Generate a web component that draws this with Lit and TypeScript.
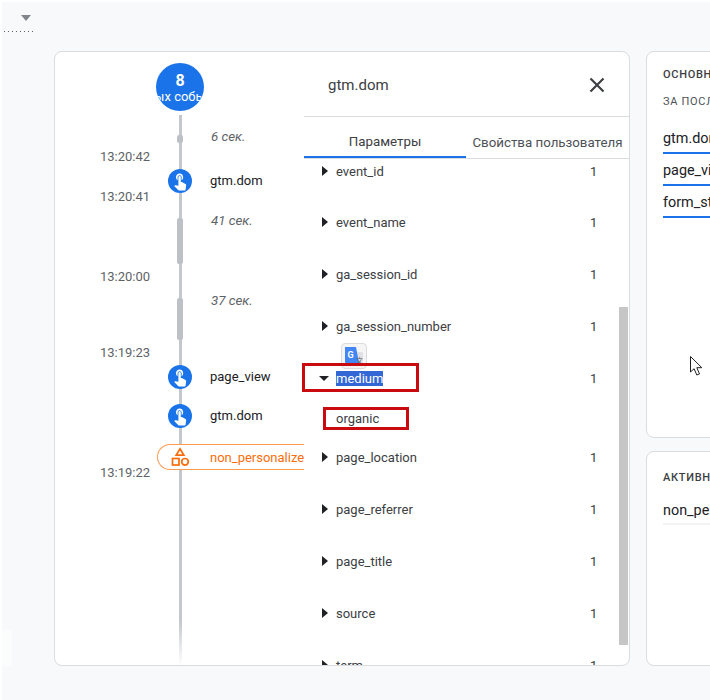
import { LitElement, html, css, svg } from "lit";
import { customElement } from "lit/decorators.js";

const hand = svg`<g transform="translate(2.4 2.2) scale(.8)" fill="#fff"><path d="M9 11.24V7.5C9 6.12 10.12 5 11.5 5S14 6.12 14 7.5v3.74c1.21-.81 2-2.18 2-3.74C16 5.01 13.99 3 11.5 3S7 5.01 7 7.5c0 1.56.79 2.93 2 3.74zm9.84 4.63l-4.54-2.26c-.17-.07-.35-.11-.54-.11H13v-6c0-.83-.67-1.5-1.5-1.5S10 6.67 10 7.5v10.74l-3.43-.72c-.08-.01-.15-.03-.24-.03-.31 0-.59.13-.79.33l-.79.8 4.94 4.94c.27.27.65.44 1.06.44h6.79c.75 0 1.33-.55 1.44-1.28l.75-5.27c.01-.07.02-.14.02-.2 0-.62-.38-1.16-.91-1.38z"/></g>`;

type Row = { h: number; kind: "gap" | "event" | "conv"; label: string; pillTop?: number; pill?: number; labelTop?: number };
const rows: Row[] = [
  { h: 58, kind: "gap", label: "6 сек.", pillTop: 24, pill: 8, labelTop: 18 },
  { h: 24, kind: "event", label: "gtm.dom" },
  { h: 71, kind: "gap", label: "41 сек.", pillTop: 25, pill: 46, labelTop: 20 },
  { h: 101, kind: "gap", label: "37 сек.", pillTop: 34, pill: 42, labelTop: 29 },
  { h: 24, kind: "event", label: "page_view" },
  { h: 39, kind: "event", label: "gtm.dom" },
  { h: 42, kind: "conv", label: "non_personalize" },
];
const times: [string, number][] = [
  ["13:20:42", 97], ["13:20:41", 24], ["13:20:00", 64], ["13:19:23", 60], ["13:19:22", 104],
];
const before = ["event_id", "event_name", "ga_session_id", "ga_session_number"];
const after = ["page_location", "page_referrer", "page_title", "source", "term"];

@customElement("app-root")
export class AppRoot extends LitElement {
  static styles = css`
    :host { display: block; width: 710px; height: 700px; overflow: hidden; background: #fff; font-family: Roboto, sans-serif; color: #202124; }
    .page { margin: 2px 0 0 2px; height: 698px; background: #f8f9fa; position: relative; overflow: hidden; }
    .blob { position: absolute; left: 0; top: 628px; width: 10px; height: 36px; background: #fbfcfc; }
    .top { height: 49px; box-sizing: border-box; padding: 13px 0 0 19px; }
    .tri { width: 0; height: 0; border: 5px solid transparent; border-top: 6px solid #80868b; border-bottom: 0; }
    .dots { width: 29px; height: 1px; margin: 10px 0 0 -17px; background: repeating-linear-gradient(90deg, #5f6368 0 1px, transparent 1px 4px); }
    .main { display: flex; gap: 16px; margin-left: 52px; }
    .card { background: #fff; border: 1px solid #dadce0; border-radius: 8px; box-sizing: border-box; }
    .left { width: 576px; height: 615px; display: flex; overflow: hidden; flex: none; }
    .side { display: flex; flex-direction: column; gap: 13px; width: 200px; flex: none; }
    .side1 { height: 387px; padding: 16px 0 0 16px; }
    .side2 { height: 215px; padding: 19px 0 0 16px; }
    .h { font-size: 11px; font-weight: 500; letter-spacing: .7px; color: #3c4043; white-space: nowrap; line-height: 14px; }
    .h2 { font-size: 11px; font-weight: 400; letter-spacing: .7px; color: #4d5156; margin-top: 13px; line-height: 14px; white-space: nowrap; }
    .list { margin-top: 13px; }
    .li { font-size: 14.4px; line-height: 18px; height: 32px; box-sizing: border-box; white-space: nowrap; border-bottom: 2.5px solid #1a73e8; padding-top: 8px; color: #202124; }
    .li2 { border-bottom: 2px solid #f1f3f4; height: 40px; padding-top: 17px; }
    .tl { width: 249px; flex: none; display: flex; position: relative; overflow: hidden; }
    .times { width: 52px; flex: none; font-size: 13px; color: #5f6368; padding-left: 45px; }
    .time { line-height: 16px; height: 16px; }
    .rail { position: absolute; left: 124px; top: 63px; bottom: 0; width: 3px; background: linear-gradient(#c4c7cc 92%, #fff); }
    .stage { flex: 1; display: flex; flex-direction: column; position: relative; }
    .burst { width: 48px; height: 48px; margin: 11px 0 0 4px; border-radius: 50%; background: #1a73e8; color: #fff; overflow: hidden; display: flex; flex-direction: column; align-items: center; position: relative; z-index: 1; flex: none; }
    .burst b { font-size: 16px; line-height: 18px; margin-top: 9px; font-weight: 700; }
    .burst span { font-size: 13px; line-height: 14px; white-space: nowrap; }
    .rows { position: relative; z-index: 1; }
    .row { display: flex; align-items: flex-end; }
    .row.gap { align-items: flex-start; }
    .railcell { width: 40px; flex: none; display: flex; justify-content: center; margin-left: 8px; }
    .gapbar { width: 6px; border-radius: 2px; background: #bdc1c6; }
    .node { width: 24px; height: 24px; border-radius: 50%; background: #1a73e8; display: block; }
    .gl { font-size: 13.3px; font-style: italic; color: #5f6368; margin-left: 11px; line-height: 16px; }
    .el { font-size: 13px; margin-left: 10px; color: #202124; line-height: 25px; }
    .conv { width: 147px; height: 26px; margin-left: 5px; box-sizing: border-box; border: 1px solid #ff9a52; border-right: 0; border-radius: 13px 0 0 13px; background: #fff; display: flex; align-items: center; color: #fa6d0a; font-size: 13px; white-space: nowrap; }
    .conv svg { margin-left: 12px; flex: none; }
    .conv span { margin-left: 20px; }
    .detail { flex: 1; min-width: 0; position: relative; display: flex; flex-direction: column; overflow: hidden; }
    .dh { height: 65px; flex: none; box-sizing: border-box; border-bottom: 1px solid #dadce0; display: flex; align-items: center; justify-content: space-between; padding: 2px 24px 0 24px; font-size: 15px; color: #3c4043; }
    .dh svg { display: block; }
    .tabs { height: 42px; flex: none; display: flex; border-bottom: 1px solid #dadce0; box-sizing: border-box; font-size: 13.3px; color: #4d5156; }
    .tab { display: flex; align-items: center; justify-content: center; box-sizing: border-box; height: 41px; padding-top: 10px; white-space: nowrap; }
    .tab.a { width: 162px; color: #3c4043; border-bottom: 2px solid #1a73e8; }
    .tab.b { flex: 1; }
    .body { flex: 1; overflow: hidden; position: relative; font-size: 13px; color: #3c4043; padding-top: 5px; }
    .p { display: flex; align-items: flex-start; line-height: 16px; height: 52px; padding-left: 16px; }
    .p.f { height: 51px; }
    .p.m { height: 40px; }
    .caret { width: 0; height: 0; border-left: 6px solid #202124; border-top: 5px solid transparent; border-bottom: 5px solid transparent; margin: 2px 8px 0 2px; flex: none; }
    .caret.open { border-top: 5px solid #202124; border-left: 5px solid transparent; border-right: 5px solid transparent; border-bottom: 0; margin: 5px 7px 0 -1px; }
    .n { width: 254px; flex: none; }
    .sel { background: #3367d6; color: #fff; }
    .v { height: 39px; padding-left: 32px; line-height: 16px; }
    .box { position: absolute; border: 3px solid #c90a0f; box-sizing: border-box; pointer-events: none; }
    .boxm { left: 300px; top: 361px; width: 117px; height: 29px; }
    .boxo { left: 321px; top: 405px; width: 86px; height: 23px; }
    .bar { position: absolute; right: 1px; top: 148px; width: 9px; height: 338px; background: #c6c6c6; }
    .xlate { position: absolute; left: 339px; top: 341px; width: 26px; height: 26px; background: #f5f5f5; border: 1px solid #dadce0; border-radius: 4px; box-sizing: border-box; }
    .xlate svg { display: block; }
    .cursor { position: absolute; left: 688px; top: 354px; }
  `;

  render() {
    return html`<div class="page">
      <div class="blob"></div>
      <div class="top"><div class="tri"></div><div class="dots"></div></div>
      <div class="main">
        <div class="card left">
          <div class="tl">
            <div class="rail"></div>
            <div class="times">
              ${times.map(([t, m]) => html`<div class="time" style="margin-top:${m}px">${t}</div>`)}
            </div>
            <div class="stage">
              <div class="burst"><b>8</b><span>ых собы</span></div>
              <div class="rows">${rows.map((r) => this.row(r))}</div>
            </div>
          </div>
          <div class="detail">
            <div class="dh"><span>gtm.dom</span>
              <svg width="16" height="16" viewBox="0 0 16 16"><path d="M1.5 1.5l13 13M14.500 1.500l-13 13" stroke="#3c4043" stroke-width="2.200" fill="none"/></svg>
            </div>
            <div class="tabs"><div class="tab a">Параметры</div><div class="tab b">Свойства пользователя</div></div>
            <div class="body">
              ${before.map((n, i) => html`<div class="p ${i === 0 ? "f" : ""}"><i class="caret"></i><span class="n">${n}</span><span>1</span></div>`)}
              <div class="p m"><i class="caret open"></i><span class="n"><span class="sel">medium</span></span><span>1</span></div>
              <div class="v">organic</div>
              ${after.map((n) => html`<div class="p"><i class="caret"></i><span class="n">${n}</span><span>1</span></div>`)}
              <div class="bar"></div>
            </div>
          </div>
        </div>
        <div class="side">
          <div class="card side1">
            <div class="h">ОСНОВНЫЕ СОБЫТИЯ</div>
            <div class="h2">ЗА ПОСЛЕДНИЕ 30 МИНУТ</div>
            <div class="list"><div class="li">gtm.dom</div><div class="li">page_view</div><div class="li">form_start</div></div>
          </div>
          <div class="card side2">
            <div class="h">АКТИВНЫЕ СВОЙСТВА</div>
            <div class="li li2">non_personalized</div>
          </div>
        </div>
      </div>
      <div class="xlate"><svg width="24" height="24" viewBox="0 0 24 24"><path d="M12 8h8a1 1 0 0 1 1 1v12a1 1 0 0 1-1 1h-9z" fill="#dfe1e5"/><path d="M3 3h11l3 16H4a1 1 0 0 1-1-1z" fill="#4285f4"/><text x="5.500" y="13.500" font-size="9" font-weight="700" fill="#fff" font-family="Roboto, sans-serif">G</text><text x="14" y="19" font-size="7" fill="#5f6368" font-family="'Noto Sans CJK SC', sans-serif">文</text></svg></div>
      <div class="box boxm"></div>
      <div class="box boxo"></div>
      <svg class="cursor" width="14" height="21" viewBox="0 0 14 21"><path d="M.5.500v15.500l3.600-3.300 2.700 6.300 2.700-1.100-2.700-6.200h5z" fill="#fff" stroke="#202124" stroke-width="1"/></svg>
    </div>`;
  }

  row(r: Row) {
    if (r.kind === "gap")
      return html`<div class="row gap" style="height:${r.h}px">
        <div class="railcell"><div class="gapbar" style="height:${r.pill}px;margin-top:${r.pillTop}px"></div></div>
        <span class="gl" style="margin-top:${r.labelTop}px">${r.label}</span></div>`;
    if (r.kind === "event")
      return html`<div class="row" style="height:${r.h}px">
        <div class="railcell"><svg class="node" viewBox="0 0 24 24">${hand}</svg></div>
        <span class="el">${r.label}</span></div>`;
    return html`<div class="row" style="height:${r.h}px"><div class="conv">
      <svg width="20" height="20" viewBox="0 0 20 20" fill="none" stroke="#fa6d0a" stroke-width="1.700"><path d="M10 1.800l3.800 6.400H6.200z"/><rect x="2.500" y="11.500" width="6.500" height="6.500"/><circle cx="15" cy="14.800" r="3.300"/></svg>
      <span>${r.label}</span></div></div>`;
  }
}
